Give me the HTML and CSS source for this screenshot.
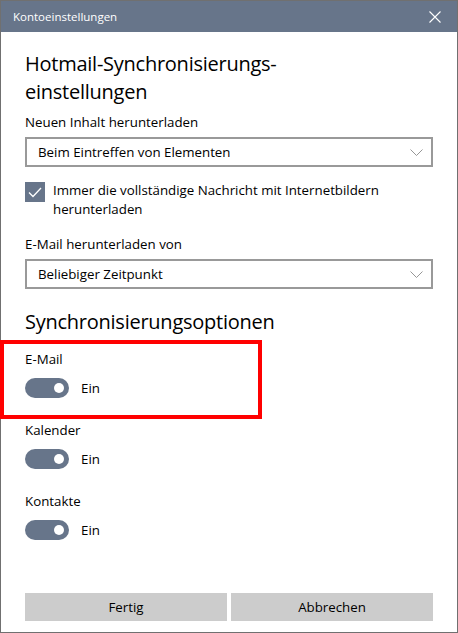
FILE: index.html
```html
<!DOCTYPE html>
<html lang="de">
<head>
  <meta charset="UTF-8" />
  <meta name="viewport" content="width=device-width, initial-scale=1" />
  <title>Kontoeinstellungen</title>
  <link rel="stylesheet" href="styles.css">
</head>
<body>
  <div class="window">
    <div class="titlebar">
      <span class="title">Kontoeinstellungen</span>
      <svg class="close" width="12" height="12" viewBox="0 0 12 12">
        <path d="M0.5 0.5 L11.5 11.5 M11.5 0.5 L0.5 11.5" stroke="#fff" stroke-width="1.1" fill="none" />
      </svg>
    </div>

    <div class="content">
      <h1>Hotmail-Synchronisierungs-<br>einstellungen</h1>

      <div class="label">Neuen Inhalt herunterladen</div>
      <div class="combo">
        <span>Beim Eintreffen von Elementen</span>
        <svg class="chev" width="13" height="7" viewBox="0 0 13 7">
          <path d="M0.5 0.5 L6.5 6.5 L12.5 0.5" stroke="#8a8a8a" stroke-width="0.9" fill="none" />
        </svg>
      </div>

      <div class="check-row">
        <div class="checkbox">
          <svg width="14" height="11" viewBox="0 0 14 11">
            <path d="M1 5.5 L5 9.5 L13 1" stroke="#fff" stroke-width="1.3" fill="none" />
          </svg>
        </div>
        <div class="check-text">Immer die vollständige Nachricht mit Internetbildern herunterladen</div>
      </div>

      <div class="label">E-Mail herunterladen von</div>
      <div class="combo">
        <span>Beliebiger Zeitpunkt</span>
        <svg class="chev" width="13" height="7" viewBox="0 0 13 7">
          <path d="M0.5 0.5 L6.5 6.5 L12.5 0.5" stroke="#8a8a8a" stroke-width="0.9" fill="none" />
        </svg>
      </div>

      <h2>Synchronisierungsoptionen</h2>

      <div class="options">
        <div class="option highlight">
          <div class="opt-label">E-Mail</div>
          <div class="toggle-row"><span class="toggle"></span><span>Ein</span></div>
        </div>
        <div class="option">
          <div class="opt-label">Kalender</div>
          <div class="toggle-row"><span class="toggle"></span><span>Ein</span></div>
        </div>
        <div class="option">
          <div class="opt-label">Kontakte</div>
          <div class="toggle-row"><span class="toggle"></span><span>Ein</span></div>
        </div>
      </div>
    </div>

    <div class="buttons">
      <button class="btn">Fertig</button>
      <button class="btn">Abbrechen</button>
    </div>
  </div>
</body>
</html>
```

FILE: styles.css
```css
*,
*::before,
*::after {
  box-sizing: border-box;
}

body {
  margin: 0;
  padding: 0;
  font-family: "Open Sans", "Noto Sans", sans-serif;
  background-color: #fff;
  color: #000;
}

.window {
  width: 458px;
  height: 633px;
  border: 1px solid #707070;
  display: flex;
  flex-direction: column;
  background: #fff;
}

.titlebar {
  height: 31px;
  background-color: #67758a;
  color: #fff;
  display: flex;
  align-items: center;
  justify-content: space-between;
  padding: 0 16px 0 12px;
  flex-shrink: 0;
}

.title {
  font-size: 11.5px;
}

.content {
  padding: 0 24px;
  flex: 1;
}

h1 {
  font-size: 20px;
  font-weight: normal;
  line-height: 28px;
  margin: 18px 0 6px;
  letter-spacing: -0.25px;
}

h2 {
  font-size: 20px;
  font-weight: normal;
  line-height: 28px;
  margin: 19px 0 0;
  letter-spacing: -0.25px;
}

.label {
  font-size: 13.3px;
  line-height: 20px;
  margin-bottom: 5px;
}

.combo {
  height: 30px;
  border: 2px solid #999;
  display: flex;
  align-items: center;
  justify-content: space-between;
  padding: 0 8px 0 11px;
  font-size: 13.3px;
}

.chev {
  margin-top: 1px;
}

.check-row {
  display: flex;
  gap: 8px;
  margin: 14px 0 15px;
}

.checkbox {
  width: 20px;
  height: 20px;
  background-color: #67758a;
  display: flex;
  align-items: center;
  justify-content: center;
  flex-shrink: 0;
  margin-top: 1px;
}

.check-text {
  font-size: 13.3px;
  line-height: 19px;
}

.options {
  margin-top: 4px;
}

.option {
  padding-top: 9px;
  height: 71px;
}

.highlight {
  position: relative;
}

.highlight::before {
  content: "";
  position: absolute;
  left: -25px;
  top: 0;
  width: 262px;
  height: 79px;
  border: 4px solid #f00;
}

.opt-label {
  font-size: 13.3px;
  line-height: 20px;
  margin-bottom: 9px;
}

.toggle-row {
  display: flex;
  align-items: center;
  gap: 12px;
  font-size: 13.3px;
}

.toggle {
  width: 44px;
  height: 20px;
  border-radius: 10px;
  background-color: #67758a;
  position: relative;
}

.toggle::after {
  content: "";
  position: absolute;
  right: 5px;
  top: 5px;
  width: 10px;
  height: 10px;
  border-radius: 50%;
  background: #fff;
}

.buttons {
  display: flex;
  gap: 4px;
  padding: 0 24px 11px;
}

.btn {
  flex: 1;
  height: 28px;
  border: none;
  background-color: #ccc;
  font-family: "Open Sans", "Noto Sans", sans-serif;
  font-size: 13.3px;
  color: #000;
}
```
